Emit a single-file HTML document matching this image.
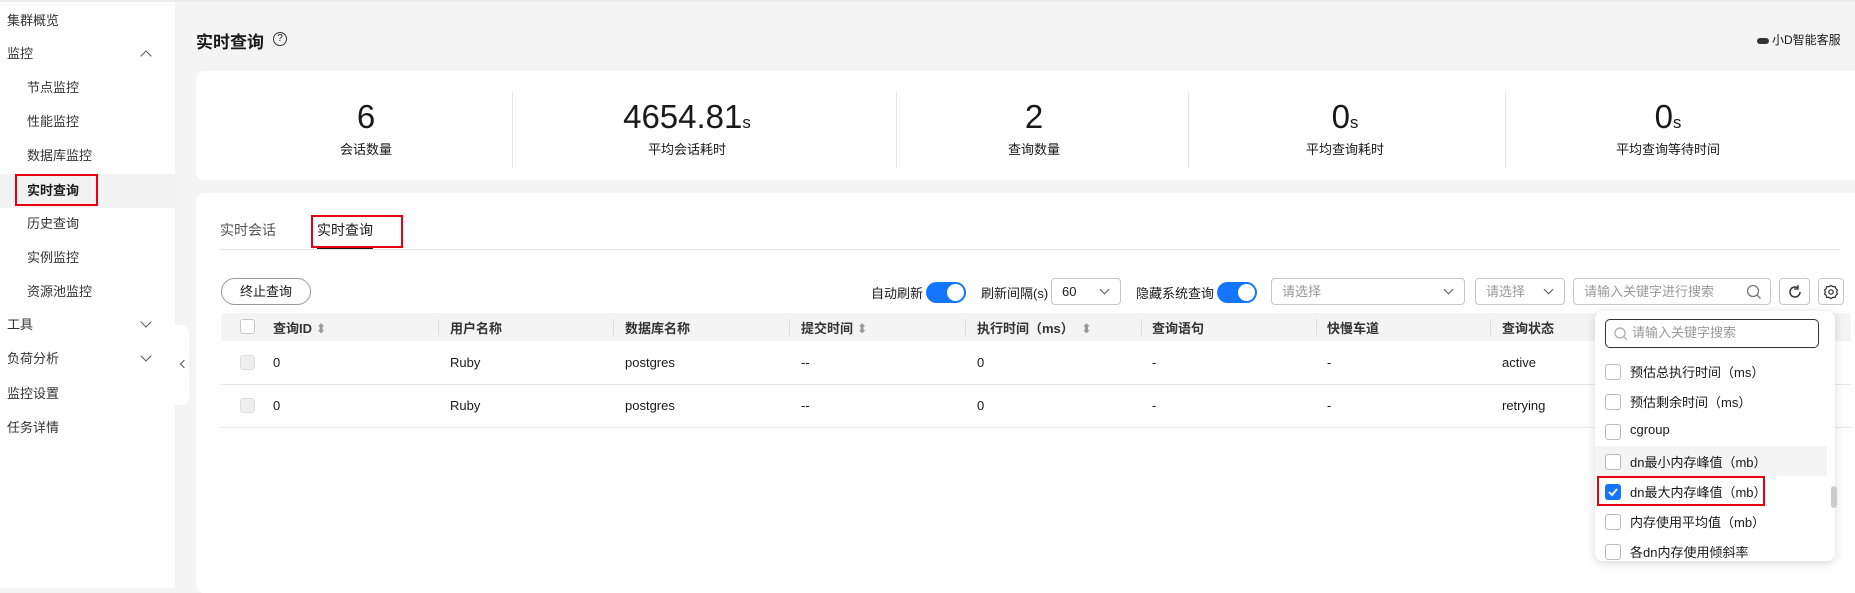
<!DOCTYPE html>
<html><head><meta charset="utf-8"><style>
*{box-sizing:border-box;margin:0;padding:0}
body{width:1855px;height:588px;overflow:hidden;background:#f4f4f4;font-family:"Liberation Sans","Noto Sans CJK SC",sans-serif;font-size:13px;color:#191919;position:relative}
.abs{position:absolute}
.side{left:0;top:0;width:175px;height:588px;background:#fff;border-top:2px solid #ececec}
.si{position:absolute;left:7px;font-size:13px;color:#333;line-height:18px}
.sub{left:27px}
.chev{position:absolute;width:8px;height:8px;border-left:1.3px solid #555;border-top:1.3px solid #555}
.card{background:#fff;border-radius:8px}
.num{position:absolute;font-size:33px;color:#191919;transform:translateX(-50%);top:97px;white-space:nowrap;line-height:40px}
.num small{font-size:17px}
.lbl{position:absolute;transform:translateX(-50%);top:139px;font-size:13px;white-space:nowrap}
.div{position:absolute;top:92px;width:1px;height:76px;background:#e6e6e6}
.sel{position:absolute;top:278px;height:27px;border:1px solid #c8c8c8;border-radius:4px;background:#fff;font-size:13px;color:#999;padding-left:10px;line-height:25px}
.arr{position:absolute;right:12px;top:7px;width:7px;height:7px;border-right:1.3px solid #555;border-bottom:1.3px solid #555;transform:rotate(45deg)}
.tog{position:absolute;top:282px;width:40px;height:21px;border-radius:11px;background:#1476ff}
.tog:after{content:"";position:absolute;right:2px;top:2px;width:17px;height:17px;border-radius:50%;background:#fff}
.th{position:absolute;top:318px;font-size:13px;color:#333;font-weight:bold}
.td{position:absolute;font-size:13px;color:#191919}
.cb{position:absolute;width:15px;height:15px;border:1px solid #c8c8c8;border-radius:3px;background:#fff}
.hsep{position:absolute;top:319px;width:1px;height:16px;background:#ddd}
.it{position:absolute;left:1630px;font-size:13px;color:#191919}
.icb{position:absolute;left:1605px;width:16px;height:16px;border:1px solid #bbb;border-radius:3px;background:#fff}
.red{position:absolute;border:2px solid #e60012}
.srt{color:#999;font-weight:normal}
</style></head><body>
<div class="abs side">
<div class="si" style="top:10px">集群概览</div>
<div class="si" style="top:43px">监控</div><div class="chev" style="left:142px;top:50px;transform:rotate(45deg)"></div>
<div class="si sub" style="top:77px">节点监控</div>
<div class="si sub" style="top:111px">性能监控</div>
<div class="si sub" style="top:145px">数据库监控</div>
<div class="abs" style="left:0;top:172px;width:175px;height:34px;background:#f2f2f2"></div>
<div class="si sub" style="top:180px;font-weight:bold;color:#191919">实时查询</div>
<div class="red" style="left:15px;top:172px;width:83px;height:32px"></div>
<div class="si sub" style="top:213px">历史查询</div>
<div class="si sub" style="top:247px">实例监控</div>
<div class="si sub" style="top:281px">资源池监控</div>
<div class="si" style="top:314px">工具</div><div class="chev" style="left:142px;top:316px;transform:rotate(-135deg)"></div>
<div class="si" style="top:348px">负荷分析</div><div class="chev" style="left:142px;top:350px;transform:rotate(-135deg)"></div>
<div class="si" style="top:383px">监控设置</div>
<div class="si" style="top:417px">任务详情</div>
</div>
<div class="abs" style="left:175px;top:325px;width:14px;height:80px;background:#fff;border-radius:0 8px 8px 0"></div>
<div class="chev" style="left:181px;top:361px;width:6px;height:6px;transform:rotate(-45deg)"></div>
<div class="abs" style="left:175px;top:0;width:1680px;height:2px;background:#ececec"></div>

<div class="abs" style="left:196px;top:28px;font-size:17px;font-weight:bold">实时查询</div>
<div class="abs" style="left:273px;top:32px;width:14px;height:14px;border:1.3px solid #333;border-radius:50%;font-size:10px;text-align:center;line-height:12px">?</div>
<div class="abs" style="left:1757px;top:31px;font-size:12px;color:#191919"><span style="display:inline-block;width:12px;height:6px;background:#333;border-radius:3px;margin-right:3px;vertical-align:middle"></span>小D智能客服</div>

<div class="abs card" style="left:196px;top:71px;width:1665px;height:109px"></div>
<div class="num" style="left:366px">6</div><div class="lbl" style="left:366px">会话数量</div>
<div class="div" style="left:512px"></div>
<div class="num" style="left:687px">4654.81<small>s</small></div><div class="lbl" style="left:687px">平均会话耗时</div>
<div class="div" style="left:896px"></div>
<div class="num" style="left:1034px">2</div><div class="lbl" style="left:1034px">查询数量</div>
<div class="div" style="left:1188px"></div>
<div class="num" style="left:1345px">0<small>s</small></div><div class="lbl" style="left:1345px">平均查询耗时</div>
<div class="div" style="left:1505px"></div>
<div class="num" style="left:1668px">0<small>s</small></div><div class="lbl" style="left:1668px">平均查询等待时间</div>

<div class="abs card" style="left:196px;top:193px;width:1665px;height:400px"></div>
<div class="abs" style="left:220px;top:220px;font-size:14px;color:#555">实时会话</div>
<div class="abs" style="left:317px;top:220px;font-size:14px;color:#191919">实时查询</div>
<div class="abs" style="left:220px;top:249px;width:1620px;height:1px;background:#e6e6e6"></div>
<div class="abs" style="left:317px;top:247px;width:56px;height:2px;background:#191919"></div>
<div class="red" style="left:311px;top:215px;width:92px;height:33px"></div>

<div class="abs" style="left:221px;top:278px;width:90px;height:27px;border:1px solid #999;border-radius:14px;text-align:center;line-height:25px;font-size:13px">终止查询</div>
<div class="abs" style="left:871px;top:283px">自动刷新</div>
<div class="tog" style="left:926px"></div>
<div class="abs" style="left:981px;top:283px">刷新间隔(s)</div>
<div class="sel" style="left:1051px;width:70px;color:#191919">60<div class="arr"></div></div>
<div class="abs" style="left:1136px;top:283px">隐藏系统查询</div>
<div class="tog" style="left:1217px"></div>
<div class="sel" style="left:1271px;width:194px">请选择<div class="arr"></div></div>
<div class="sel" style="left:1475px;width:90px">请选择<div class="arr"></div></div>
<div class="sel" style="left:1573px;width:198px">请输入关键字进行搜索
<svg style="position:absolute;right:8px;top:5px" width="16" height="16"><circle cx="7" cy="7" r="5.5" fill="none" stroke="#777" stroke-width="1.3"/><line x1="11" y1="11" x2="14.5" y2="14.5" stroke="#777" stroke-width="1.3"/></svg></div>
<div class="sel" style="left:1779px;width:31px;padding:0"><svg style="position:absolute;left:7px;top:5px" width="16" height="16"><path d="M13 8a5 5 0 1 1-2-4" fill="none" stroke="#333" stroke-width="1.5"/><path d="M11 1v4h-4" fill="none" stroke="#333" stroke-width="1.3"/></svg></div>
<div class="sel" style="left:1818px;width:26px;padding:0"><svg style="position:absolute;left:4px;top:5px" width="16" height="16"><path d="M8 1.5l2 1.2 2.2-.2.6 2.1 1.7 1.4-1 2 1 2-1.7 1.4-.6 2.1-2.2-.2L8 14.5l-2-1.2-2.2.2-.6-2.1L1.5 10l1-2-1-2 1.7-1.4.6-2.1 2.2.2z" fill="none" stroke="#333" stroke-width="1.2"/><circle cx="8" cy="8" r="2.2" fill="none" stroke="#333" stroke-width="1.2"/></svg></div>

<div class="abs" style="left:221px;top:313px;width:1630px;height:28px;background:#f4f4f4"></div>
<div class="cb" style="left:240px;top:319px"></div>
<div class="th" style="left:273px">查询ID <span class="srt">⬍</span></div>
<div class="hsep" style="left:438px"></div><div class="th" style="left:450px">用户名称</div>
<div class="hsep" style="left:613px"></div><div class="th" style="left:625px">数据库名称</div>
<div class="hsep" style="left:789px"></div><div class="th" style="left:801px">提交时间 <span class="srt">⬍</span></div>
<div class="hsep" style="left:965px"></div><div class="th" style="left:977px">执行时间（ms） &nbsp;<span class="srt">⬍</span></div>
<div class="hsep" style="left:1141px"></div><div class="th" style="left:1152px">查询语句</div>
<div class="hsep" style="left:1316px"></div><div class="th" style="left:1327px">快慢车道</div>
<div class="hsep" style="left:1490px"></div><div class="th" style="left:1502px">查询状态</div>

<div class="abs" style="left:221px;top:384px;width:1630px;height:1px;background:#e8e8e8"></div>
<div class="abs" style="left:221px;top:427px;width:1630px;height:1px;background:#e8e8e8"></div>
<div class="cb" style="left:240px;top:355px;background:#eee;border-color:#ddd"></div>
<div class="cb" style="left:240px;top:398px;background:#eee;border-color:#ddd"></div>
<div class="td" style="left:273px;top:355px">0</div><div class="td" style="left:450px;top:355px">Ruby</div><div class="td" style="left:625px;top:355px">postgres</div><div class="td" style="left:801px;top:355px">--</div><div class="td" style="left:977px;top:355px">0</div><div class="td" style="left:1152px;top:355px">-</div><div class="td" style="left:1327px;top:355px">-</div><div class="td" style="left:1502px;top:355px">active</div>
<div class="td" style="left:273px;top:398px">0</div><div class="td" style="left:450px;top:398px">Ruby</div><div class="td" style="left:625px;top:398px">postgres</div><div class="td" style="left:801px;top:398px">--</div><div class="td" style="left:977px;top:398px">0</div><div class="td" style="left:1152px;top:398px">-</div><div class="td" style="left:1327px;top:398px">-</div><div class="td" style="left:1502px;top:398px">retrying</div>

<div class="abs" style="left:1595px;top:311px;width:240px;height:250px;background:#fff;border-radius:8px;box-shadow:0 2px 10px rgba(0,0,0,.15)"></div>
<div class="abs" style="left:1605px;top:319px;width:214px;height:29px;border:1.5px solid #333;border-radius:5px;font-size:13px;color:#999;padding-left:26px;line-height:26px">请输入关键字搜索
<svg style="position:absolute;left:8px;top:7px" width="14" height="14"><circle cx="6" cy="6" r="5" fill="none" stroke="#aaa" stroke-width="1.2"/><line x1="9.5" y1="9.5" x2="13" y2="13" stroke="#aaa" stroke-width="1.2"/></svg></div>
<div class="abs" style="left:1595px;top:446px;width:232px;height:30px;background:#f4f4f4"></div>
<div class="icb" style="top:364px"></div><div class="it" style="top:362px">预估总执行时间（ms）</div>
<div class="icb" style="top:394px"></div><div class="it" style="top:392px">预估剩余时间（ms）</div>
<div class="icb" style="top:424px"></div><div class="it" style="top:422px">cgroup</div>
<div class="icb" style="top:454px"></div><div class="it" style="top:452px">dn最小内存峰值（mb）</div>
<div class="icb" style="top:484px;background:#1476ff;border-color:#1476ff"><svg width="14" height="14" style="position:absolute;left:0;top:0"><path d="M3 7l3 3 5-6" fill="none" stroke="#fff" stroke-width="1.8"/></svg></div><div class="it" style="top:482px">dn最大内存峰值（mb）</div>
<div class="icb" style="top:514px"></div><div class="it" style="top:512px">内存使用平均值（mb）</div>
<div class="icb" style="top:544px"></div><div class="it" style="top:542px">各dn内存使用倾斜率</div>
<div class="red" style="left:1597px;top:476px;width:168px;height:30px"></div>
<div class="abs" style="left:1831px;top:486px;width:6px;height:22px;background:#ccc;border-radius:3px"></div>
</body></html>
